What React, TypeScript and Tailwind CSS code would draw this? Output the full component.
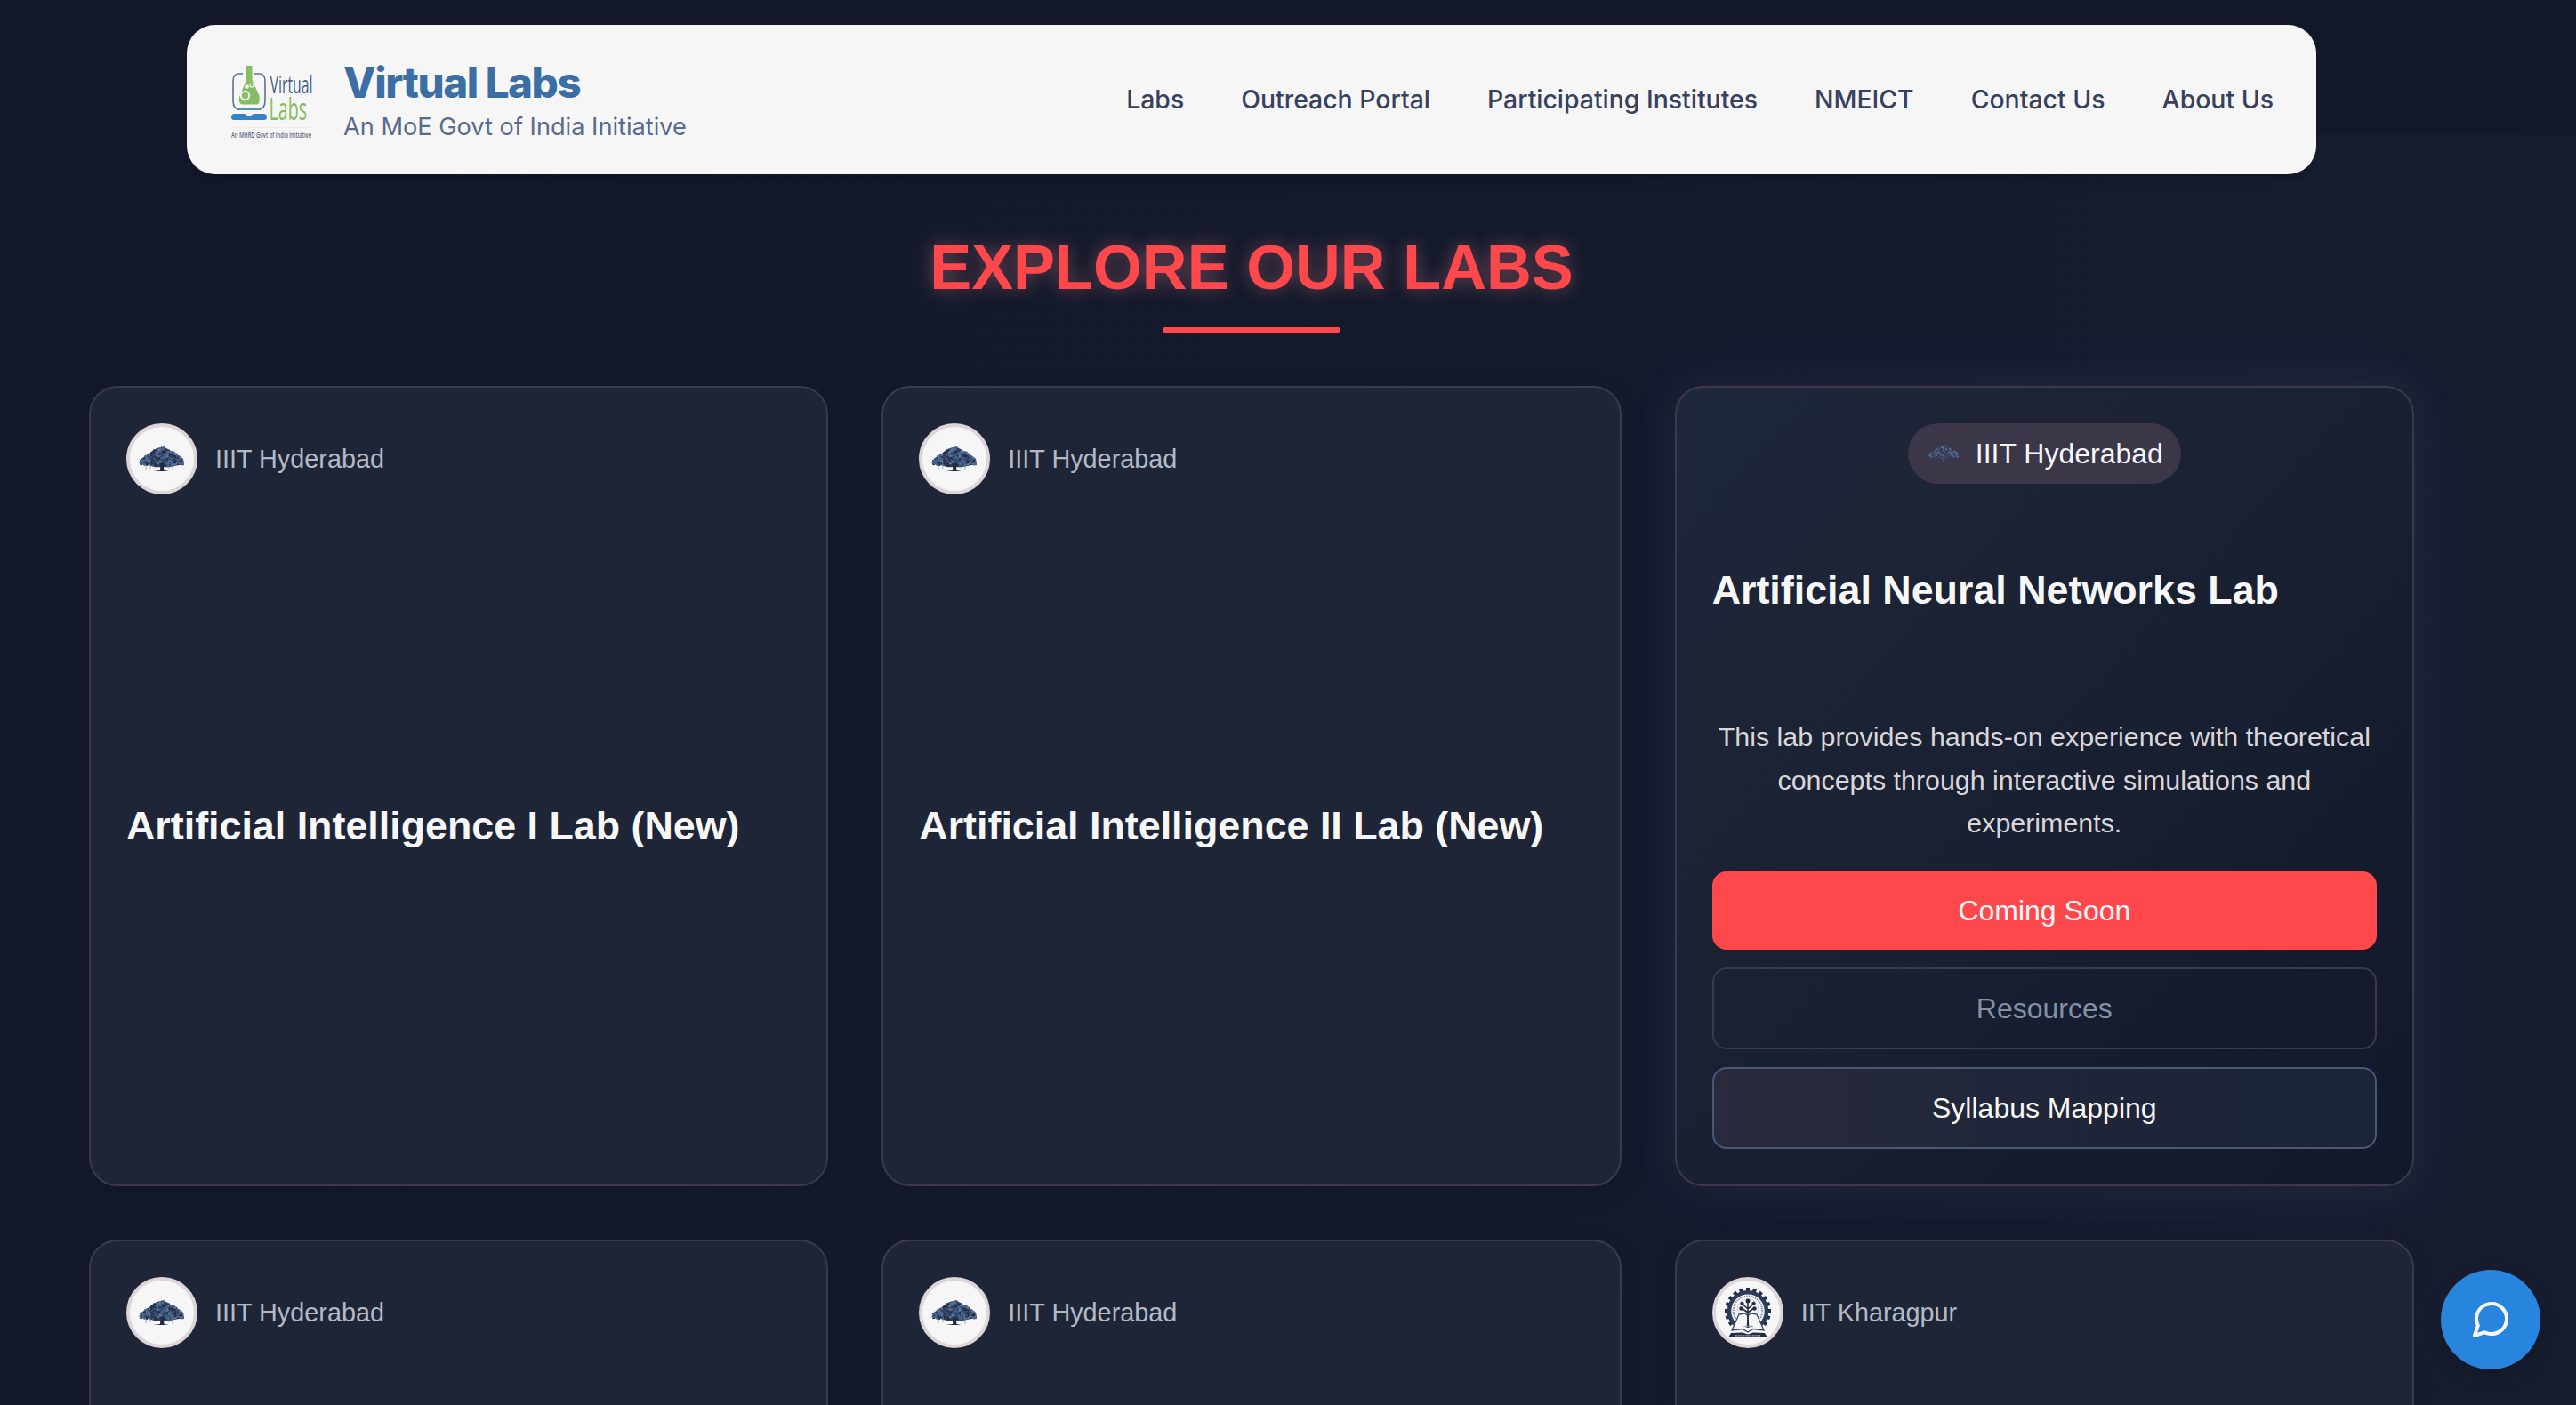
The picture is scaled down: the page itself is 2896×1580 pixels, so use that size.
import type { ReactNode } from "react";

function blobs(seed: number, n: number) {
  const out: { x: number; y: number; r: number; c: number }[] = [];
  let s = seed;
  const rnd = () => {
    s = (s * 16807) % 2147483647;
    return s / 2147483647;
  };
  for (let i = 0; i < n; i++) {
    const x = rnd() * 2 - 1;
    const top = 2 + Math.pow(Math.abs(x), 1.5) * 15;
    const bottom = 24 - Math.abs(x) * 2;
    const y = top + rnd() * (bottom - top);
    out.push({ x: 26 + x * 24, y, r: 0.6 + rnd() * 1, c: Math.floor(rnd() * 4) });
  }
  return out;
}

const leaves = blobs(77, 420);

function Tree({ className, light = false }: { className: string; light?: boolean }) {
  const fills = light
    ? ["#45678f", "#5a7ba3", "#3c4f70", "#41618d"]
    : ["#2d3a57", "#41618d", "#262b40", "#5c769c"];
  return (
    <svg viewBox="0 0 52 32" className={className} preserveAspectRatio="none">
      {!light && (
        <path
          d="M1 20 Q6 17 9 14 Q12 8 17 6 Q20 2 26 2 Q31 2 34 5 Q38 8 41 12 Q48 13 50 17 Q52 22 44 23 L34 25 L18 25 L8 22 Z"
          fill="#33466a"
        />
      )}
      {leaves
        .filter((_, i) => !light || i % 3 === 0)
        .map((b, i) => (
          <circle key={i} cx={b.x} cy={b.y} r={b.r} fill={fills[b.c]} />
        ))}
      <path d="M24.500 20 L24 29 L16 30 H34 L28.500 29 L27.500 20 Z" fill={light ? "#3c4f70" : "#23293f"} />
      {!light && <path d="M8 22v6M13 23v4M38 23v6M34 23v4" stroke="#7b89a0" strokeWidth="0.7" />}
    </svg>
  );
}

function GearSeal() {
  const teeth = Array.from({ length: 20 }, (_, i) => i * 18).filter((a) => a < 130 || a > 230);
  return (
    <svg viewBox="0 0 52 58" className="h-[58px] w-[52px]">
      {teeth.map((a) => (
        <rect key={a} x="24" y="1" width="4" height="5" fill="#232c45" transform={`rotate(${a} 26 27)`} />
      ))}
      <path d="M11 42 A21 21 0 1 1 41 42" fill="none" stroke="#2b3b5a" strokeWidth="4.5" />
      <path d="M12.5 36 A16.3 16.3 0 1 1 39.5 36" fill="none" stroke="#8793a8" strokeWidth="2" strokeDasharray="1.4 1" />
      <circle cx="26" cy="25" r="11.5" fill="none" stroke="#b9bfca" strokeWidth="0.7" />
      <path
        d="M16 31 L22 30 Q25 31 26 33 Q27 31 30 30 L36 31 L44 49 L32 47.500 L26 51 L20 47.500 L8 49 Z"
        fill="#f6f6f7"
        stroke="#33486b"
        strokeWidth="1.300"
      />
      <path d="M26 46 V17 M26 29 L19 24 M26 29 L33 24 M26 25 L19.500 19 M26 25 L32.500 19" fill="none" stroke="#232c45" strokeWidth="1.6" />
      <path d="M24.500 46 L26 30 L27.500 46 Z" fill="#232c45" />
      <circle cx="26" cy="16" r="2.500" fill="#232c45" />
      <circle cx="19.500" cy="19" r="2.200" fill="#232c45" />
      <circle cx="32.500" cy="19" r="2.200" fill="#232c45" />
      <circle cx="18.500" cy="24.500" r="2.200" fill="#232c45" />
      <circle cx="33.500" cy="24.500" r="2.200" fill="#232c45" />
      <path d="M20 44.500 H32" stroke="#8793a8" strokeWidth="1.500" strokeDasharray="1.500 1" />
      <path d="M7 52 L20 51.500 L26 53.500 L32 51.500 L45 52 L48 57 H4 Z" fill="#232c45" />
      <path d="M12 54.800 H40" stroke="#a7aebb" strokeWidth="1.300" strokeDasharray="2 .7" />
    </svg>
  );
}

function SiteLogo() {
  return (
    <svg viewBox="0 0 96 96" className="h-24 w-24 overflow-visible">
      <path d="M15 19 H10 Q4 19.500 4 27 V49 Q4 58.500 11 59 H33 Q40 58.500 40 49 V27 Q40 19.500 34 19 H28" fill="none" stroke="#5f7290" strokeWidth="1.600" />
      <path d="M9 59 H36" stroke="#4f93b8" strokeWidth="1.800" strokeDasharray="3 .8" />
      <path d="M18.500 10 H25.500 V26 L33.500 44 Q34.500 53 31 53.500 H14 Q10 53 11 45 L18.500 27 Z" fill="#85bd62" />
      <circle cx="17.500" cy="43.500" r="4.700" fill="#85bd62" stroke="#f6f6f7" strokeWidth="2" />
      <circle cx="19.500" cy="33.500" r="2.300" fill="#f6f6f7" />
      <circle cx="25" cy="32" r="2" fill="none" stroke="#f6f6f7" strokeWidth="1.200" />
      <path d="M5 64 H17 Q22 68.500 27 64 H39 Q42 64.500 42 67.500 Q42 71 39 71 H5 Q2 71 2 67.500 Q2 64.500 5 64 Z" fill="#3483c6" />
      <text x="45.500" y="41" textLength="48" lengthAdjust="spacingAndGlyphs" fontFamily="Open Sans, sans-serif" fontSize="28" fill="#4c5c7f">
        Virtual
      </text>
      <text x="44.500" y="71" textLength="42.500" lengthAdjust="spacingAndGlyphs" fontFamily="Open Sans, sans-serif" fontSize="35" fill="#85bd62">
        Labs
      </text>
      <path d="M3 79.500 H92" stroke="#d9d7da" strokeWidth="0.700" strokeDasharray="1 1.500" />
      <text x="2" y="90.500" textLength="90" lengthAdjust="spacingAndGlyphs" fontFamily="Open Sans, sans-serif" fontSize="9.500" fontWeight="600" fill="#5a6480">
        An MHRD Govt of India Initiative
      </text>
    </svg>
  );
}

const navItems = ["Labs", "Outreach Portal", "Participating Institutes", "NMEICT", "Contact Us", "About Us"];

function Header() {
  return (
    <header className="flex h-[168px] w-[2394px] items-center justify-between rounded-[32px] bg-[#f6f6f7] px-12 font-['Inter',sans-serif] shadow-[0_6px_16px_rgba(0,0,0,0.2)]">
      <div className="flex items-center gap-8">
        <SiteLogo />
        <div className="flex flex-col">
          <span className="mt-1 text-[47.500px] leading-[56px] font-extrabold tracking-[-0.03em] whitespace-nowrap text-[#3a6ea5]">
            Virtual Labs
          </span>
          <span className="mt-0.5 text-[27.200px] leading-[40px] whitespace-nowrap text-[#586b8c]">
            An MoE Govt of India Initiative
          </span>
        </div>
      </div>
      <nav className="flex gap-16">
        {navItems.map((item) => (
          <a key={item} className="text-[28.400px] leading-[40px] font-medium whitespace-nowrap text-[#36415f]">
            {item}
          </a>
        ))}
      </nav>
    </header>
  );
}

function Card({ name, seal, title }: { name: string; seal: ReactNode; title?: string }) {
  return (
    <article className="flex h-[900px] flex-col rounded-[32px] border-2 border-[#3c394b] bg-[#1d2537] p-10 shadow-[0_8px_32px_rgba(0,0,0,0.1)]">
      <div className="flex items-center gap-5">
        <div className="flex size-20 items-center justify-center rounded-full border-4 border-[#ddd5d7] bg-[#f6f6f7]">{seal}</div>
        <span className="text-[28.800px] leading-[40px] text-[#b3b9c6]">{name}</span>
      </div>
      {title && (
        <h3 className="mt-[338px] text-[44.800px] leading-[68px] font-bold whitespace-nowrap text-[#f7f7f8]">{title}</h3>
      )}
    </article>
  );
}

function OpenCard() {
  return (
    <article className="flex h-[900px] flex-col items-center rounded-[32px] border-2 border-[#3d394b] bg-linear-to-br from-[#1f273a] via-[#182031] to-[#12182a] p-10 shadow-[0_0_50px_rgba(120,110,150,0.14)]">
      <div className="flex h-[68px] items-center gap-4 rounded-full bg-[#3b3648] px-5">
        <Tree light className="h-[22px] w-10 px-0.5" />
        <span className="text-[32px] leading-[40px] whitespace-nowrap text-[#f7f7f8]">IIIT Hyderabad</span>
      </div>
      <h3 className="mt-[85px] self-start text-[44.800px] leading-[68px] font-bold whitespace-nowrap text-[#f7f7f8]">
        Artificial Neural Networks Lab
      </h3>
      <p className="mt-auto mb-[30px] text-center text-[30.400px] leading-[48.640px] text-[#dad6da]">
        This lab provides hands-on experience with theoretical
        <br />
        concepts through interactive simulations and
        <br />
        experiments.
      </p>
      <div className="flex w-full flex-col gap-5 text-[32px]">
        <button className="h-[88px] rounded-2xl bg-[#ff484c] text-[#f7f7f8]">Coming Soon</button>
        <button className="h-[92px] rounded-2xl border-2 border-[#3b394b] text-[#8490a6]">Resources</button>
        <button className="h-[92px] rounded-2xl border-2 border-[#48597a] bg-linear-to-r from-[#292a3c] via-[#1f2639] to-[#1b2336] text-[#f7f7f8]">
          Syllabus Mapping
        </button>
      </div>
    </article>
  );
}

const tree = <Tree className="h-[31px] w-[52px]" />;

export default function App() {
  return (
    <div className="relative h-[1580px] w-[2896px] overflow-hidden bg-[#13192a] bg-[linear-gradient(to_right,#13192b,#141a2c_60%,#181e30_90%,#171d2f)] bg-[position:0_152px] bg-no-repeat font-['Liberation_Sans',Arial,sans-serif]">
      <div className="flex w-[2814px] flex-col items-center pt-7">
        <Header />
        <h1 className="mt-[61px] text-[70.400px] leading-[88px] font-bold whitespace-nowrap text-[#ff484c] [text-shadow:0_0_20px_rgba(255,140,150,0.4)]">
          EXPLORE OUR LABS
        </h1>
        <div className="mt-[23px] h-1.5 w-[200px] rounded-full bg-[#ff484c]" />
        <main className="mt-[60px] grid w-[2614px] grid-cols-3 gap-[60px]">
          <Card name="IIIT Hyderabad" seal={tree} title="Artificial Intelligence I Lab (New)" />
          <Card name="IIIT Hyderabad" seal={tree} title="Artificial Intelligence II Lab (New)" />
          <OpenCard />
          <Card name="IIIT Hyderabad" seal={tree} />
          <Card name="IIIT Hyderabad" seal={tree} />
          <Card name="IIT Kharagpur" seal={<GearSeal />} />
        </main>
      </div>
      <button className="absolute right-10 bottom-10 flex size-28 items-center justify-center rounded-full bg-[#2785de] shadow-[0_8px_24px_rgba(0,0,0,0.2)]">
        <svg viewBox="0 0 24 24" className="size-12" fill="none" stroke="#f7f7f8" strokeWidth="2" strokeLinecap="round" strokeLinejoin="round">
          <path d="m3 21 1.9-5.7a8.5 8.5 0 1 1 3.8 3.8z" />
        </svg>
      </button>
    </div>
  );
}
